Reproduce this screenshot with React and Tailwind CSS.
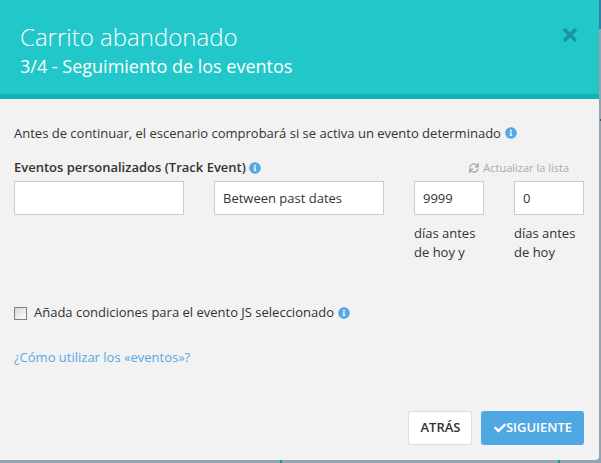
import React from 'react';
import { FaInfoCircle, FaSync, FaCheck, FaTimes } from 'react-icons/fa';

const Info = () => <FaInfoCircle className="inline-block text-[12px] text-[#55a8e4]" />;

const Field = ({ value, width }) => (
  <div className={`${width} h-[34px] shrink-0 flex items-center px-2 pt-[1px] bg-white border border-[#ccc] text-[13px] text-[#333]`}>
    {value}
  </div>
);

const App = () => (
  <div className="w-[601px] h-[463px] flex flex-col bg-[#94a3b0] overflow-hidden font-['Open_Sans',sans-serif]">
    <div className="flex h-[460px] shrink-0">
      <div className="w-[599px] h-[460px] flex flex-col bg-[#f2f2f2] rounded-br-[4px] overflow-hidden">
        <div className="h-[99px] shrink-0 flex justify-between bg-[#22c7c9] border-b-[5px] border-[#0fb3b5] pl-5 pr-[19px] text-white">
          <div className="pt-[20px]">
            <div className="text-[24px] leading-[33px] font-light">Carrito abandonado</div>
            <div className="text-[18px] leading-[26px]">3/4 - Seguimiento de los eventos</div>
          </div>
          <FaTimes className="mt-[25px] text-[20px] text-[#17989f]" />
        </div>

        <div className="flex-1 flex flex-col px-[14px] text-[13px] text-[#333]">
          <div className="mt-[25px] leading-[18px] flex items-center gap-[4px]">
            Antes de continuar, el escenario comprobará si se activa un evento determinado <Info />
          </div>

          <div className="mt-[17px] flex items-center justify-between w-[555px] h-[18px]">
            <div className="font-semibold flex items-center gap-[3px]">
              Eventos personalizados (Track Event) <Info />
            </div>
            <div className="flex items-center gap-[4px] text-[11px] text-[#aaa]">
              <FaSync className="text-[10px]" /> Actualizar la lista
            </div>
          </div>

          <div className="mt-[4px] flex gap-[30px]">
            <Field value="" width="w-[170px]" />
            <Field value="Between past dates" width="w-[170px]" />
            <div className="w-[70px] shrink-0">
              <Field value="9999" width="w-[70px]" />
              <div className="mt-[9px] leading-[19px] whitespace-nowrap">días antes<br />de hoy y</div>
            </div>
            <div className="w-[70px] shrink-0">
              <Field value="0" width="w-[70px]" />
              <div className="mt-[9px] leading-[19px] whitespace-nowrap">días antes<br />de hoy</div>
            </div>
          </div>

          <div className="mt-[42px] flex items-center h-[18px]">
            <span className="w-[13px] h-[13px] border border-[#808080] bg-gradient-to-br from-[#d8d8d8] to-white mr-[7px]" />
            <span className="mr-[4px]">Añada condiciones para el evento JS seleccionado</span>
            <Info />
          </div>

          <a className="mt-[26px] leading-[18px] text-[#55a8e4]">¿Cómo utilizar los «eventos»?</a>

          <div className="mt-[45px] w-[570px] flex justify-end gap-[9px] text-[13px] font-semibold">
            <button className="w-[64px] h-[34px] pl-[1px] bg-white border border-[#ddd] rounded-[3px] text-[#333]">ATRÁS</button>
            <button className="w-[103px] h-[34px] pl-[1px] bg-[#4fa8e3] rounded-[3px] text-white flex items-center justify-center">
              <FaCheck className="text-[12px]" />SIGUIENTE
            </button>
          </div>
        </div>
      </div>

      {/* page behind the modal, visible at the right edge */}
      <div className="w-[2px] flex flex-col">
        <div className="h-[29px] bg-[#3a7ca5]" />
        <div className="mt-[90px] ml-[1px] w-[1px] h-[2px] bg-[#4a4f52]" />
      </div>
    </div>

    <div className="h-[3px] flex">
      <div className="ml-[280px] w-[2px] bg-[#2a8fa0]" />
      <div className="ml-[276px] w-[2px] bg-[#2a8fa0]" />
    </div>
  </div>
);

export default App;
